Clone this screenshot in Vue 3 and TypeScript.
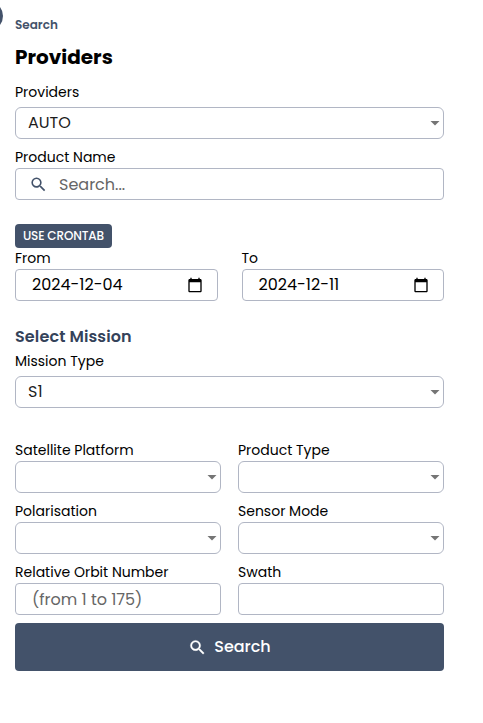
<script setup lang="ts">
import { ref } from 'vue'

interface Field {
  label: string
  kind: 'select' | 'text'
  placeholder?: string
}

const provider = ref('AUTO')
const mission = ref('S1')
const range = ref([
  { label: 'From', value: '2024-12-04' },
  { label: 'To', value: '2024-12-11' },
])

const fields: Field[] = [
  { label: 'Satellite Platform', kind: 'select' },
  { label: 'Product Type', kind: 'select' },
  { label: 'Polarisation', kind: 'select' },
  { label: 'Sensor Mode', kind: 'select' },
  { label: 'Relative Orbit Number', kind: 'text', placeholder: '(from 1 to 175)' },
  { label: 'Swath', kind: 'text' },
]

const lens =
  'M15.5 14h-.79l-.28-.27A6.47 6.47 0 0 0 16 9.5 6.5 6.5 0 1 0 9.5 16c1.61 0 3.09-.59 4.23-1.57l.27.28v.79l5 4.99L20.49 19l-4.99-5zm-6 0C7.01 14 5 11.99 5 9.5S7.01 5 9.5 5 14 7.01 14 9.5 11.99 14 9.5 14z'
const calendar =
  'M20 3h-1V1h-2v2H7V1H5v2H4c-1.1 0-2 .9-2 2v16c0 1.1.9 2 2 2h16c1.1 0 2-.9 2-2V5c0-1.1-.9-2-2-2zm0 18H4V8h16v13z'
</script>

<template>
  <main class="panel">
    <span class="toggle"></span>
    <div class="crumb">Search</div>
    <h1>Providers</h1>

    <div class="field spaced">
      <label>Providers</label>
      <div class="box select"><span>{{ provider }}</span><i class="caret"></i></div>
    </div>
    <div class="field name">
      <label>Product Name</label>
      <div class="box search">
        <svg class="lens" viewBox="0 0 24 24"><path :d="lens" /></svg>
        <span class="hint">Search...</span>
      </div>
    </div>

    <button class="cron" type="button">USE CRONTAB</button>
    <div class="dates">
      <div v-for="d in range" :key="d.label" class="field">
        <label>{{ d.label }}</label>
        <div class="box date">
          <span>{{ d.value }}</span>
          <svg class="cal" viewBox="0 0 24 24"><path :d="calendar" /></svg>
        </div>
      </div>
    </div>

    <h2>Select Mission</h2>
    <div class="field spaced">
      <label>Mission Type</label>
      <div class="box select"><span>{{ mission }}</span><i class="caret"></i></div>
    </div>

    <div class="grid">
      <div v-for="f in fields" :key="f.label" class="field">
        <label>{{ f.label }}</label>
        <div class="box" :class="f.kind">
          <span v-if="f.placeholder" class="hint">{{ f.placeholder }}</span>
          <i v-if="f.kind === 'select'" class="caret"></i>
        </div>
      </div>
    </div>

    <button class="submit" type="button">
      <svg class="lens" viewBox="0 0 24 24"><path :d="lens" /></svg>
      <span>Search</span>
    </button>
  </main>
</template>

<style>
body {
  background: #fff;
  overflow: hidden;
}
</style>

<style scoped>
.panel {
  position: relative;
  box-sizing: border-box;
  width: 483px;
  height: 723px;
  padding: 15px 39px 0 15px;
  overflow: hidden;
  font-family: Poppins, Inter, "Liberation Sans", sans-serif;
  color: #000;
}
.panel * { box-sizing: border-box; }
span { white-space: nowrap; }
.toggle {
  position: absolute;
  left: -27px;
  top: 1px;
  width: 30px;
  height: 30px;
  border-radius: 50%;
  background: #43526a;
}
.crumb {
  height: 20px;
  line-height: 20px;
  font-size: 12px;
  font-weight: 600;
  color: #43526a;
}
h1 {
  height: 30px;
  margin: 7px 0 10px;
  font-size: 20px;
  line-height: 30px;
  font-weight: 700;
}
label {
  display: block;
  height: 21px;
  font-size: 14px;
  line-height: 21px;
}
.spaced label { margin-bottom: 4px; }
.name { margin-top: 8px; }
.box {
  display: flex;
  align-items: center;
  height: 32px;
  padding: 0 17px 0 16px;
  border: 1px solid #b1b6c4;
  border-radius: 4px;
  font-size: 16px;
  line-height: 30px;
}
.select {
  justify-content: space-between;
  padding: 0 3px 0 12px;
  border-radius: 6px;
  color: #1c1c1c;
}
.caret {
  width: 10px;
  height: 5px;
  margin-left: auto;
  background: #757575;
  clip-path: polygon(0 0, 100% 0, 50% 100%);
}
.lens {
  flex: none;
  width: 19px;
  height: 19px;
  fill: currentColor;
}
.search { padding-left: 13px; color: #43526a; }
.search .lens { margin-right: 11px; }
.hint {
  padding-top: 2px;
  color: #666;
}
.cron {
  display: flex;
  align-items: center;
  justify-content: center;
  width: 97px;
  height: 24px;
  margin-top: 24px;
  padding: 0;
  border: 0;
  border-radius: 4px;
  background: #43526a;
  color: #fff;
  font: 500 12px/24px Poppins, Inter, sans-serif;
  letter-spacing: -0.14px;
}
.dates {
  display: grid;
  grid-template-columns: 202.5px 202.5px;
  gap: 24px;
}
.date {
  justify-content: space-between;
  padding-right: 14px;
}
.cal {
  width: 16px;
  height: 16px;
  margin-bottom: 1px;
}
h2 {
  height: 24px;
  margin: 24px 0 2px;
  font-size: 16px;
  line-height: 24px;
  font-weight: 600;
  letter-spacing: 0.12px;
  color: #34425a;
}
.grid {
  display: grid;
  grid-template-columns: 206px 206px;
  gap: 8px 17px;
  margin-top: 32px;
}
.submit {
  display: flex;
  align-items: center;
  justify-content: center;
  gap: 7px;
  width: 429px;
  height: 48px;
  margin-top: 8px;
  padding: 0;
  border: 0;
  border-radius: 4px;
  background: #43526a;
  color: #fff;
  font: 500 16px/24px Poppins, Inter, sans-serif;
}
.submit .lens {
  stroke: currentColor;
  stroke-width: 0.4;
}
</style>
